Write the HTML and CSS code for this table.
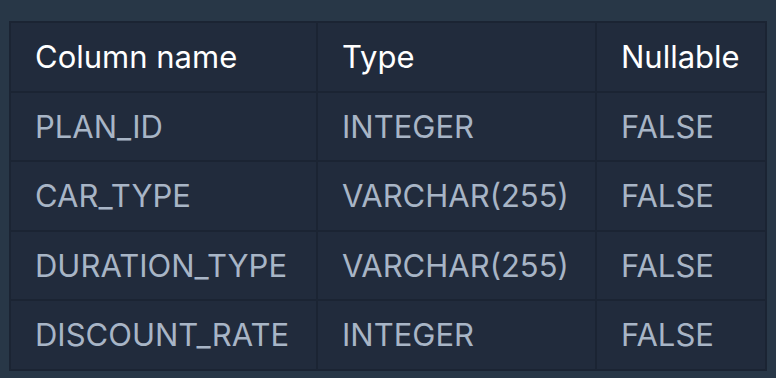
FILE: index.html
```html
<!DOCTYPE html>
<html lang="en">
<head>
  <meta charset="UTF-8" />
  <title>Columns</title>
  <link rel="stylesheet" href="styles.css">
</head>
<body>
  <table class="schema">
    <thead>
      <tr><th class="col-name">Column name</th><th class="col-type">Type</th><th>Nullable</th></tr>
    </thead>
    <tbody>
      <tr><td>PLAN_ID</td><td>INTEGER</td><td>FALSE</td></tr>
      <tr><td>CAR_TYPE</td><td>VARCHAR(255)</td><td>FALSE</td></tr>
      <tr><td>DURATION_TYPE</td><td>VARCHAR(255)</td><td>FALSE</td></tr>
      <tr><td>DISCOUNT_RATE</td><td>INTEGER</td><td>FALSE</td></tr>
    </tbody>
  </table>
</body>
</html>
```

FILE: styles.css
```css
body { background-color: #283747; font-family: 'Inter', sans-serif; margin: 0; padding: 21px 9px 8px 9px; }
.schema { border-collapse: collapse; width: 758px; background: #212b3c; border: 2px solid #1b2433; }
.schema th, .schema td { border: 2px solid #1b2433; padding: 0 24px; height: 67.5px; text-align: left; font-size: 31px; font-weight: 400; }
.schema th { color: #ffffff; }
.schema td { color: #a8b5c6; }
.col-name { width: 257px; }
.col-type { width: 229px; }
```
